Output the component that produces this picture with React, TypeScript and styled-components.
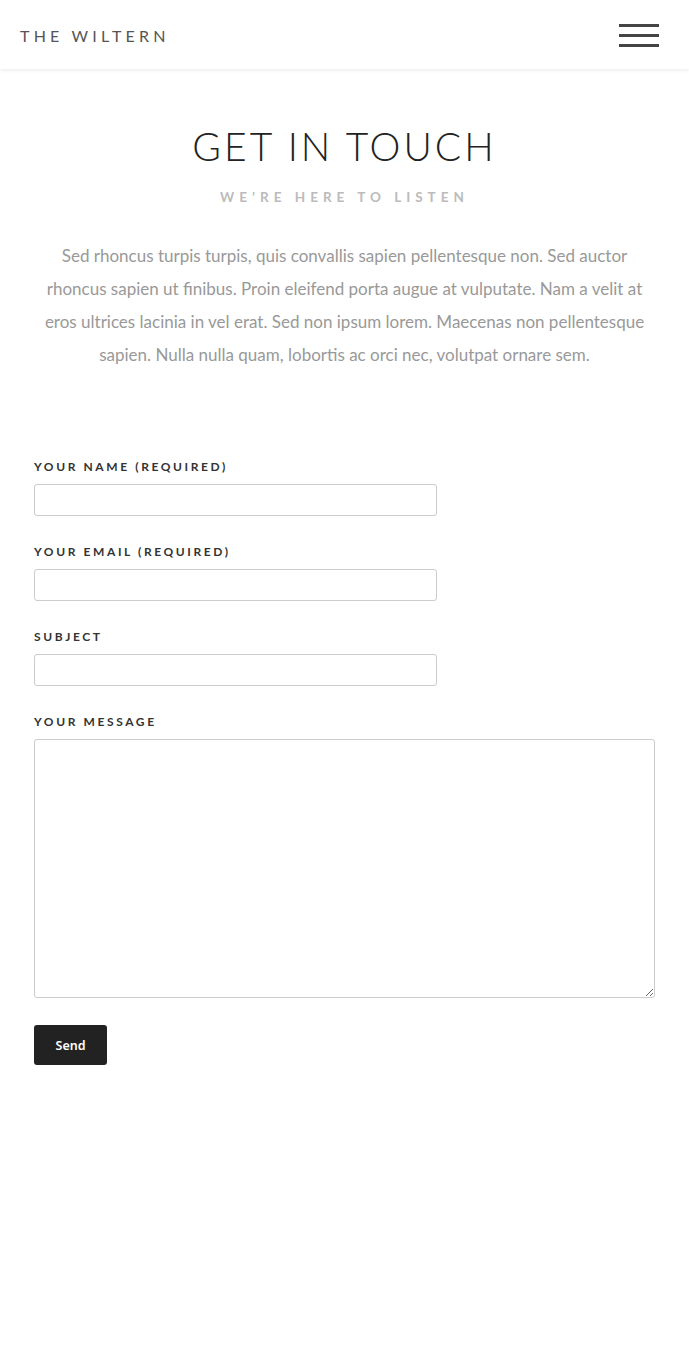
import React from 'react';
import styled, { createGlobalStyle } from 'styled-components';

const GlobalStyle = createGlobalStyle`
  html, body {
    margin: 0;
    padding: 0;
    background: #fff;
  }
  * {
    box-sizing: border-box;
  }
`;

const Page = styled.div`
  min-height: 1351px;
  background: #fff;
  font-family: Lato, 'Liberation Sans', sans-serif;
`;

const Header = styled.header`
  display: flex;
  align-items: center;
  justify-content: space-between;
  height: 69px;
  padding: 0 30px 0 20px;
  background: #fff;
  box-shadow: 0 1px 4px rgba(0, 0, 0, 0.09);
`;

const Logo = styled.div`
  font-family: Lato, sans-serif;
  font-weight: 400;
  font-size: 16px;
  letter-spacing: 4.2px;
  color: #555;
  margin-top: 1px;
`;

const MenuButton = styled.button`
  display: flex;
  flex-direction: column;
  gap: 7px;
  width: 40px;
  padding: 0;
  border: 0;
  background: none;
  cursor: pointer;
  margin-top: 1px;
`;

const MenuLine = styled.span`
  display: block;
  height: 3px;
  width: 40px;
  background: #444;
`;

const Intro = styled.section`
  display: flex;
  flex-direction: column;
  align-items: center;
  padding: 53px 34px 0;
  text-align: center;
`;

const Title = styled.h1`
  margin: 0;
  font-family: Lato, sans-serif;
  font-weight: 300;
  font-size: 39px;
  line-height: 48px;
  letter-spacing: 3px;
  color: #222;
`;

const Subtitle = styled.h2`
  margin: 18px 0 0;
  font-family: Lato, sans-serif;
  font-weight: 700;
  font-size: 13.5px;
  line-height: 18px;
  letter-spacing: 5px;
  color: #bbb;
`;

const Lead = styled.p`
  max-width: 602px;
  margin: 33px 0 0;
  font-family: Lato, sans-serif;
  font-weight: 400;
  font-size: 17px;
  line-height: 33px;
  color: #999;
`;

const Form = styled.form`
  display: flex;
  flex-direction: column;
  padding: 89px 34px 0;
`;

const Field = styled.label<{ $wide?: boolean }>`
  display: flex;
  flex-direction: column;
  gap: 10px;
  width: ${(p) => (p.$wide ? '100%' : '403px')};
  margin-bottom: 29px;
`;

const FieldLabel = styled.span`
  font-family: Lato, sans-serif;
  font-weight: 700;
  font-size: 12px;
  line-height: 14px;
  letter-spacing: 2.6px;
  color: #333;
`;

const Input = styled.input`
  width: 100%;
  height: 32px;
  border: 1px solid #ccc;
  border-radius: 3px;
  background: #fff;
  font-size: 14px;
  padding: 0 8px;
  outline: none;
`;

const TextArea = styled.textarea`
  width: 100%;
  height: 259px;
  border: 1px solid #ccc;
  border-radius: 3px;
  background: #fff;
  font-size: 14px;
  padding: 8px;
  resize: vertical;
  outline: none;
`;

const SendButton = styled.button`
  align-self: flex-start;
  width: 73px;
  height: 40px;
  margin-top: -2px;
  border: 0;
  border-radius: 3px;
  background: #222;
  color: #fff;
  font-family: 'Noto Sans', sans-serif;
  font-weight: 600;
  font-size: 12.5px;
  cursor: pointer;
`;

const fields = [
  { label: 'YOUR NAME (REQUIRED)', type: 'text' },
  { label: 'YOUR EMAIL (REQUIRED)', type: 'email' },
  { label: 'SUBJECT', type: 'text' },
];

export default function App() {
  return (
    <Page>
      <GlobalStyle />
      <Header>
        <Logo>THE WILTERN</Logo>
        <MenuButton aria-label="Menu">
          <MenuLine />
          <MenuLine />
          <MenuLine />
        </MenuButton>
      </Header>
      <Intro>
        <Title>GET IN TOUCH</Title>
        <Subtitle>WE’RE HERE TO LISTEN</Subtitle>
        <Lead>
          Sed rhoncus turpis turpis, quis convallis sapien pellentesque non. Sed auctor rhoncus sapien ut
          finibus. Proin eleifend porta augue at vulputate. Nam a velit at eros ultrices lacinia in vel erat.
          Sed non ipsum lorem. Maecenas non pellentesque sapien. Nulla nulla quam, lobortis ac orci nec,
          volutpat ornare sem.
        </Lead>
      </Intro>
      <Form onSubmit={(e) => e.preventDefault()}>
        {fields.map((f) => (
          <Field key={f.label}>
            <FieldLabel>{f.label}</FieldLabel>
            <Input type={f.type} />
          </Field>
        ))}
        <Field $wide>
          <FieldLabel>YOUR MESSAGE</FieldLabel>
          <TextArea />
        </Field>
        <SendButton type="submit">Send</SendButton>
      </Form>
    </Page>
  );
}
